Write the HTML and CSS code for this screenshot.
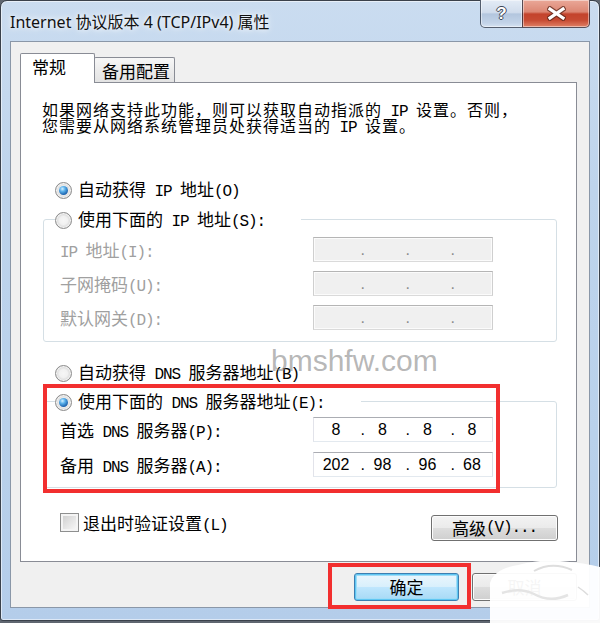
FILE: index.html
```html
<!DOCTYPE html>
<html lang="zh-CN">
<head>
<meta charset="utf-8">
<title>Internet 协议版本 4 (TCP/IPv4) 属性</title>
<link rel="stylesheet" href="styles.css">
</head>
<body>
<div class="window">
  <div class="titlebar">
    <div class="title">Internet 协议版本 4 (TCP/IPv4) 属性</div>
    <div class="caption-buttons">
      <div class="cap-btn help">?</div>
      <div class="cap-btn close">
        <svg width="19" height="15" viewBox="0 0 19 15">
          <path d="M3 3 L16 12 M16 3 L3 12" stroke="#5a2418" stroke-width="5.5" stroke-linecap="square" fill="none" opacity="0.75"/>
          <path d="M3 3 L16 12 M16 3 L3 12" stroke="#ffffff" stroke-width="3.2" stroke-linecap="square" fill="none"/>
        </svg>
      </div>
    </div>
  </div>

  <div class="client">
    <div class="tabs">
      <div class="tab active">常规</div>
      <div class="tab">备用配置</div>
    </div>

    <div class="panel">
      <p class="intro">如果网络支持此功能，则可以获取自动指派的<span class="en"> IP </span>设置。否则，<br>您需要从网络系统管理员处获得适当的<span class="en"> IP </span>设置。</p>

      <div class="option first">
        <span class="radio checked"></span>
        <span>自动获得<span class="en"> IP </span>地址<span class="en">(O)</span></span>
      </div>

      <div class="group ip-group">
        <div class="option legend">
          <span class="radio"></span>
          <span>使用下面的<span class="en"> IP </span>地址<span class="en">(S):</span></span>
        </div>
        <div class="field disabled">
          <span class="label"><span class="en">IP </span>地址<span class="en">(I):</span></span>
          <div class="ipbox"><span class="oct"></span><span class="dot">.</span><span class="oct"></span><span class="dot">.</span><span class="oct"></span><span class="dot">.</span><span class="oct"></span></div>
        </div>
        <div class="field disabled">
          <span class="label">子网掩码<span class="en">(U):</span></span>
          <div class="ipbox"><span class="oct"></span><span class="dot">.</span><span class="oct"></span><span class="dot">.</span><span class="oct"></span><span class="dot">.</span><span class="oct"></span></div>
        </div>
        <div class="field disabled">
          <span class="label">默认网关<span class="en">(D):</span></span>
          <div class="ipbox"><span class="oct"></span><span class="dot">.</span><span class="oct"></span><span class="dot">.</span><span class="oct"></span><span class="dot">.</span><span class="oct"></span></div>
        </div>
      </div>

      <div class="option dns-auto">
        <span class="radio"></span>
        <span>自动获得<span class="en"> DNS </span>服务器地址<span class="en">(B)</span></span>
      </div>

      <div class="group dns-group">
        <div class="option legend">
          <span class="radio checked"></span>
          <span>使用下面的<span class="en"> DNS </span>服务器地址<span class="en">(E):</span></span>
        </div>
        <div class="field">
          <span class="label">首选<span class="en"> DNS </span>服务器<span class="en">(P):</span></span>
          <div class="ipbox"><span class="oct">8</span><span class="dot">.</span><span class="oct">8</span><span class="dot">.</span><span class="oct">8</span><span class="dot">.</span><span class="oct">8</span></div>
        </div>
        <div class="field">
          <span class="label">备用<span class="en"> DNS </span>服务器<span class="en">(A):</span></span>
          <div class="ipbox"><span class="oct">202</span><span class="dot">.</span><span class="oct">98</span><span class="dot">.</span><span class="oct">96</span><span class="dot">.</span><span class="oct">68</span></div>
        </div>
      </div>

      <div class="panel-footer">
        <div class="check-option">
          <span class="checkbox"></span>
          <span>退出时验证设置<span class="en">(L)</span></span>
        </div>
        <div class="button advanced">高级<span class="en">(V)...</span></div>
      </div>
    </div>

    <div class="dialog-buttons">
      <div class="button default">确定</div>
      <div class="button">取消</div>
    </div>
  </div>

  <!-- annotations laid over the dialog -->
  <div class="mark mark-dns"></div>
  <div class="mark mark-ok"></div>
  <div class="watermark">bmshfw.com</div>
  <div class="stamp">
    <svg width="112" height="67" viewBox="0 0 112 67">
      <path d="M2 67 L2 26 Q6 12 30 8 Q52 2 72 4 Q98 6 112 10 L112 67 Z" fill="#ffffff" opacity="0.96"/>
      <path d="M46 14 Q64 4 84 13" stroke="#dedede" stroke-width="2" fill="none"/>
      <path d="M14 36 Q32 30 46 37 Q62 46 80 38" stroke="#e4e4e4" stroke-width="2.5" fill="none"/>
      <path d="M90 30 Q96 34 100 38" stroke="#dddddd" stroke-width="1.5" fill="none"/>
    </svg>
  </div>
</div>
</body>
</html>
```

FILE: styles.css
```css
* {
  box-sizing: border-box;
}

html,
body {
  margin: 0;
  padding: 0;
}

body {
  width: 600px;
  height: 623px;
  overflow: hidden;
  background: #5f6670;
  font-family: "Noto Sans CJK SC", sans-serif;
  color: #000;
}

/* Aero-style window frame */
.window {
  position: relative;
  width: 600px;
  height: 621px;
  border: 1px solid #3a414b;
  border-radius: 7px 7px 3px 3px;
  padding: 0 9px 12px 9px;
  display: flex;
  flex-direction: column;
  background: linear-gradient(180deg, #cadcf0 0%, #bed4ec 30%, #b9d1eb 70%, #b4cdea 100%);
  box-shadow: inset 0 0 0 1px rgba(255, 255, 255, 0.55);
}

.titlebar {
  height: 40px;
  flex: none;
  display: flex;
  justify-content: space-between;
  align-items: flex-start;
}

.title {
  margin-top: 11px;
  font-family: "Noto Sans", "Noto Sans CJK SC", sans-serif;
  font-size: 16px;
  line-height: 20px;
  color: #111;
  white-space: nowrap;
  text-shadow: 0 0 8px #fff, 0 0 4px rgba(255, 255, 255, 0.9);
}

.caption-buttons {
  display: flex;
  margin-top: -1px;
}

.cap-btn {
  height: 28px;
  display: flex;
  align-items: center;
  justify-content: center;
  border: 1px solid rgba(38, 48, 66, 0.75);
  border-top: none;
  box-shadow: inset 0 0 0 1px rgba(255, 255, 255, 0.45);
}

.help {
  width: 43px;
  border-radius: 0 0 0 5px;
  background: linear-gradient(180deg, #e4ecf6 0%, #d0dcec 46%, #b3c6de 52%, #c2d3e8 85%, #d6e3f2 100%);
  font-family: "Liberation Sans", sans-serif;
  font-weight: bold;
  font-size: 17px;
  color: #fff;
  text-shadow: 1px 0 0 #3d4656, -1px 0 0 #3d4656, 0 1px 0 #3d4656, 0 -1px 0 #3d4656;
}

.close {
  width: 68px;
  margin-left: -1px;
  border-radius: 0 0 5px 0;
  background: linear-gradient(180deg, #eaa898 0%, #dc8774 44%, #c3432c 52%, #c74b33 75%, #e08166 100%);
}

/* Client area */
.client {
  flex: 1;
  display: flex;
  flex-direction: column;
  border: 1px solid #8a97a8;
  background: #f0f0f0;
  padding: 11px 12px 0 9px;
}

.tabs {
  position: relative;
  z-index: 2;
  height: 29px;
  display: flex;
  align-items: flex-end;
}

.tab {
  font-size: 17px;
  line-height: 17px;
  border: 1px solid #898c95;
  border-bottom: none;
  border-radius: 2px 2px 0 0;
  white-space: nowrap;
}

.tab.active {
  position: relative;
  z-index: 1;
  width: 75px;
  height: 30px;
  margin-bottom: -1px;
  padding: 4px 0 0 11px;
  background: #fff;
}

.tab:not(.active) {
  width: 81px;
  height: 25px;
  margin-left: -1px;
  padding: 4px 0 0 7px;
  background: linear-gradient(180deg, #f7f7f7 0%, #ececec 50%, #e3e3e3 100%);
}

.panel {
  width: 557px;
  height: 480px;
  flex: none;
  border: 1px solid #898c95;
  background: #fff;
  padding: 0 19px 0 21px;
  display: flex;
  flex-direction: column;
  font-size: 17px;
}

.en {
  font-family: "Liberation Mono", monospace;
  font-size: 16px;
  letter-spacing: -1.1px;
  white-space: pre;
}

.intro {
  flex: none;
  height: 32px;
  margin: 18px 0 0 0;
  font-size: 16px;
  letter-spacing: 1px;
  line-height: 16px;
  white-space: nowrap;
}

.intro .en {
  line-height: 0;
  letter-spacing: -1.1px;
}

.option {
  height: 20px;
  display: flex;
  align-items: center;
  gap: 6px;
  line-height: 20px;
  white-space: nowrap;
}

.option.first {
  margin-top: 47px;
  padding-left: 13px;
}

.option.dns-auto {
  margin-top: 21px;
  padding-left: 13px;
}

.radio {
  position: relative;
  flex: none;
  width: 17px;
  height: 17px;
  border-radius: 50%;
  border: 1px solid #8b8b8b;
  background: radial-gradient(circle at 50% 50%, #f6f6f6 0%, #f1f1f1 38%, #d2d2d2 72%, #eeeeee 100%);
  box-shadow: inset 0 0 0 1px rgba(255, 255, 255, 0.7);
}

.radio.checked::after {
  content: "";
  position: absolute;
  left: 3px;
  top: 3px;
  width: 9px;
  height: 9px;
  border-radius: 50%;
  background: radial-gradient(circle at 38% 32%, #d4f0ff 0%, #5ab0ea 32%, #1c62ad 72%, #0d4585 100%);
}

/* Group boxes with a radio button as caption */
.group {
  flex: none;
  margin-left: 1px;
  border: 1px solid #d5dfe5;
  border-radius: 3px;
  display: flex;
  flex-direction: column;
  padding: 0 63px 11px 16px;
}

.ip-group {
  margin-top: 19px;
}

.dns-group {
  margin-top: 18px;
  padding-bottom: 10px;
}

.group .legend {
  align-self: flex-start;
  margin: -10px 0 0 -5px;
  padding-right: 36px;
  background: #fff;
}

.field {
  flex: none;
  height: 25px;
  display: flex;
  justify-content: space-between;
  align-items: center;
  white-space: nowrap;
}

.ip-group .field {
  margin-top: 9px;
}

.ip-group .legend + .field {
  margin-top: 7px;
}

.dns-group .field {
  margin-top: 10px;
}

.dns-group .legend + .field {
  margin-top: 5px;
}

.field.disabled .label {
  color: #a0a0a0;
}

.ipbox {
  width: 180px;
  height: 25px;
  display: grid;
  grid-template-columns: 38px 10px 35px 10px 35px 10px 34px;
  align-items: center;
  padding-left: 3px;
  border: 1px solid;
  border-color: #abadb3 #dbdfe6 #e3e9ef #e2e3ea;
  background: #fff;
  font-family: "Liberation Sans", sans-serif;
  font-size: 16px;
  line-height: 20px;
}

.field.disabled .ipbox {
  border-color: #b5b5b5 #cfcfcf #dadada #cfcfcf;
  background: #f0f0f0;
  box-shadow: inset 0 0 0 1px #fbfbfb;
  color: #8c8c8c;
}

.oct {
  text-align: center;
}

.dot {
  text-align: right;
}

.panel-footer {
  margin: 24px -1px 0 0;
  padding-left: 18px;
  display: flex;
  justify-content: space-between;
  align-items: flex-start;
}

.check-option {
  height: 20px;
  display: flex;
  align-items: center;
  gap: 4px;
  white-space: nowrap;
}

.checkbox {
  width: 19px;
  height: 19px;
  flex: none;
  border: 1px solid #8e8f8f;
  background: linear-gradient(135deg, #cbcbcb 0%, #e6e6e6 55%, #fbfbfb 100%);
  box-shadow: inset 0 0 0 2px #f4f4f4;
}

/* Push buttons */
.button {
  display: flex;
  align-items: center;
  justify-content: center;
  border: 1px solid #707070;
  border-radius: 3px;
  background: linear-gradient(180deg, #f3f3f3 0%, #ebebeb 48%, #dddddd 52%, #cfcfcf 100%);
  box-shadow: inset 0 0 0 1px #fcfcfc;
  font-size: 17px;
  line-height: 20px;
  white-space: nowrap;
}

.button.advanced {
  margin-top: 3px;
  width: 127px;
  height: 26px;
}

.dialog-buttons {
  margin-top: 11px;
  display: flex;
  justify-content: flex-end;
  gap: 13px;
}

.dialog-buttons .button {
  width: 105px;
  height: 28px;
}

.button.default {
  border-color: #3c7fb1;
  background: linear-gradient(180deg, #eaf6fd 0%, #d9f0fc 48%, #bee6fd 52%, #a7d9f5 100%);
  box-shadow: inset 0 0 0 1px #5fc6f2, inset 0 0 0 2px #9fdcf7;
}

/* Red highlight frames */
.mark {
  position: absolute;
  border: 4px solid #f22f2f;
}

.mark-dns {
  left: 42px;
  top: 383px;
  width: 457px;
  height: 109px;
}

.mark-ok {
  left: 327px;
  top: 562px;
  width: 143px;
  height: 46px;
}

.watermark {
  position: absolute;
  left: 270px;
  top: 345px;
  font-family: "Liberation Sans", sans-serif;
  font-size: 30px;
  line-height: 30px;
  color: rgba(130, 130, 130, 0.58);
  white-space: nowrap;
}

.stamp {
  position: absolute;
  left: 487px;
  top: 556px;
  width: 112px;
  height: 67px;
}

.stamp svg {
  display: block;
}
```
